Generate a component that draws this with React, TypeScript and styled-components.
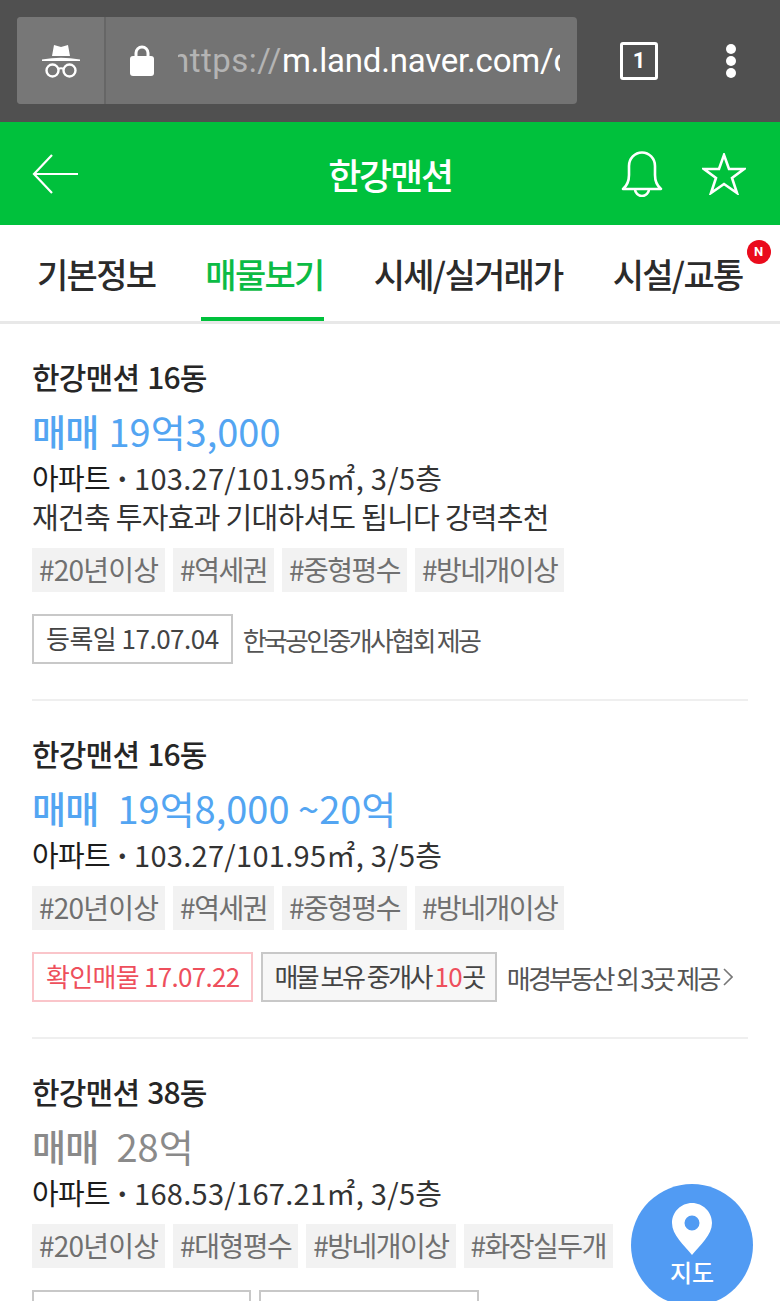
import React from 'react';
import styled, { createGlobalStyle } from 'styled-components';

const Global = createGlobalStyle`
  html, body { margin: 0; padding: 0; background: #fff; }
  body { font-family: "Noto Sans CJK KR", "Noto Sans", sans-serif; }
`;

const Page = styled.div`
  position: relative;
  width: 780px;
  height: 1301px;
  overflow: hidden;
  background: #fff;
`;

const BrowserBar = styled.div`
  height: 122px;
  box-sizing: border-box;
  padding: 17px 0 0 17px;
  background: #505050;
  display: flex;
  align-items: flex-start;
`;

const Omnibox = styled.div`
  width: 560px;
  height: 87px;
  display: flex;
  border-radius: 4px;
  background: #737373;
  overflow: hidden;
`;

const IncognitoCell = styled.div`
  width: 87px;
  flex: none;
  display: flex;
  align-items: center;
  justify-content: center;
  background: #777;
  border-right: 2px solid #666;
`;

const UrlCell = styled.div`
  flex: 1;
  min-width: 0;
  display: flex;
  align-items: center;
  padding-left: 24px;
`;

const Url = styled.div`
  margin-left: 24px;
  width: 382px;
  overflow: hidden;
  white-space: nowrap;
  font-family: "Roboto", sans-serif;
  font-size: 33px;
  letter-spacing: -0.2px;
  color: #fff;
  line-height: 44px;
`;

const UrlDim = styled.span`
  color: #b4b4b4;
  margin-left: -7px;
  letter-spacing: 0.5px;
`;

const TabCount = styled.div`
  margin: 25px 0 0 43px;
  width: 38px;
  height: 38px;
  box-sizing: border-box;
  border: 3px solid #fff;
  border-radius: 3px;
  color: #fff;
  font: 700 22px/32px "Roboto", sans-serif;
  text-align: center;
`;

const MenuDots = styled.div`
  margin: 27px 0 0 68px;
  display: flex;
  flex-direction: column;
  gap: 2px;
`;

const Dot = styled.span`
  width: 10px;
  height: 10px;
  border-radius: 50%;
  background: #fff;
`;

const GreenHeader = styled.header`
  position: relative;
  height: 103px;
  background: #00c13c;
  display: flex;
  align-items: center;
  justify-content: space-between;
  padding: 0 32px;
`;

const HeaderTitle = styled.h1`
  position: absolute;
  left: 0;
  right: 0;
  margin: 0;
  text-align: center;
  color: #fff;
  font-size: 36px;
  font-weight: 500;
  letter-spacing: -2.2px;
  line-height: 106px;
`;

const HeaderIcons = styled.div`
  display: flex;
  gap: 39px;
  align-items: center;
  margin-right: 2px;
`;

const Tabs = styled.nav`
  height: 99px;
  box-sizing: border-box;
  padding-left: 33px;
  border-bottom: 3px solid #e8e8e8;
  display: flex;
  gap: 46px;
`;

const Tab = styled.div<{ $active?: boolean }>`
  position: relative;
  flex: none;
  height: 96px;
  box-sizing: border-box;
  padding-left: 4px;
  text-align: center;
  font-size: 34px;
  font-weight: 500;
  letter-spacing: -1.7px;
  line-height: 98px;
  white-space: nowrap;
  color: ${p => (p.$active ? '#0cbb45' : '#2b2b2b')};
  border-bottom: 4px solid ${p => (p.$active ? '#00c13c' : 'transparent')};
`;

const NewBadge = styled.span`
  position: absolute;
  top: 15px;
  right: -28px;
  width: 24px;
  height: 24px;
  border-radius: 50%;
  background: #ea0b1c;
  color: #fff;
  font: 700 13px/24px "Roboto", sans-serif;
  letter-spacing: 0;
`;

const Listing = styled.article<{ $last?: boolean }>`
  margin: 0 32px;
  padding: 30px 0 35px;
  border-bottom: ${p => (p.$last ? 'none' : '2px solid #efefef')};
`;

const Name = styled.div`
  font-size: 30px;
  font-weight: 500;
  letter-spacing: -0.8px;
  word-spacing: 2px;
  line-height: 44px;
  color: #262626;
`;

const Price = styled.div<{ $gap: number; $muted?: boolean }>`
  display: flex;
  gap: ${p => p.$gap}px;
  margin-top: 9px;
  line-height: 48px;
  white-space: nowrap;
  color: ${p => (p.$muted ? '#8a8a8a' : '#53a5f2')};
`;

const PriceKind = styled.span`
  font-size: 37px;
  font-weight: 500;
  letter-spacing: -0.8px;
`;

const PriceValue = styled.span`
  font-size: 38px;
  letter-spacing: 0;
`;

const SpecRow = styled.div<{ $tight?: boolean }>`
  margin-top: ${p => (p.$tight ? -1 : 2)}px;
  font-size: 29px;
  line-height: 40px;
  letter-spacing: -0.7px;
  color: #333;
  white-space: nowrap;
`;

const SpecType = styled.span`
  color: #1c1c1c;
  letter-spacing: -0.7px;
`;

const SpecValue = styled.span`
  letter-spacing: 0.3px;
`;

const SpecDot = styled.span`
  font-weight: 700;
  margin: 0 -2px;
`;

const TagRow = styled.div`
  display: flex;
  gap: 8px;
  margin-top: 12px;
`;

const Tag = styled.span<{ $wide?: boolean }>`
  height: 44px;
  padding: 0 7px;
  background: #f2f2f2;
  color: #707070;
  font-size: 28px;
  line-height: 42px;
  letter-spacing: ${p => (p.$wide ? -0.8 : -1.5)}px;
  white-space: nowrap;
`;

const MetaRow = styled.div`
  display: flex;
  align-items: center;
  gap: 8px;
  margin-top: 22px;
  height: 50px;
`;

const Chip = styled.span<{ $red?: boolean; $grey?: boolean; $w?: number }>`
  height: 50px;
  box-sizing: border-box;
  padding: 0 ${p => (p.$grey ? 11 : 12)}px;
  ${p => (p.$w ? `width: ${p.$w}px;` : '')}
  border: 2px solid ${p => (p.$red ? '#fac5ca' : '#c8c8c8')};
  background: ${p => (p.$grey ? '#f7f7f7' : '#fff')};
  color: ${p => (p.$red ? '#ee4f5c' : '#444')};
  font-size: 26px;
  line-height: 44px;
  letter-spacing: ${p => (p.$grey ? -2.5 : p.$red ? -0.7 : -0.5)}px;
  white-space: nowrap;
`;

const RedNum = styled.span`
  color: #ee4f5c;
  letter-spacing: -0.5px;
`;

const Source = styled.span`
  display: flex;
  align-items: center;
  gap: 4px;
  margin-left: 2px;
  font-size: 26px;
  letter-spacing: -2.7px;
  color: #555;
  white-space: nowrap;
`;

const MapButton = styled.div`
  position: absolute;
  left: 631px;
  top: 1184px;
  width: 122px;
  height: 122px;
  border-radius: 50%;
  background: #519bf3;
  color: #fff;
  display: flex;
  flex-direction: column;
  align-items: center;
  padding-top: 19px;
  box-sizing: border-box;
`;

const MapLabel = styled.span`
  font-size: 24px;
  font-weight: 500;
  line-height: 30px;
  margin-top: 2px;
`;

const SpecLine = ({ area }: { area: string }) => (
  <SpecRow>
    <SpecType>아파트</SpecType> <SpecDot>·</SpecDot> <SpecValue>{area}, 3/5층</SpecValue>
  </SpecRow>
);

const TagList = ({ tags }: { tags: string[] }) => (
  <TagRow>
    {tags.map((t, i) => (
      <Tag key={t} $wide={i === 0}>{t}</Tag>
    ))}
  </TagRow>
);

const listingTags = ['#20년이상', '#역세권', '#중형평수', '#방네개이상'];

const App = () => (
  <>
    <Global />
    <Page>
      <BrowserBar>
        <Omnibox>
          <IncognitoCell>
            <svg width="38" height="36" viewBox="0 0 38 36" fill="none">
              <path d="M10 13 L12 2 L19 4 L26 2 L28 13 Z" fill="#fff" />
              <path d="M0 16.5 Q19 13 38 16.5 L38 18 L0 18 Z" fill="#fff" />
              <circle cx="10.5" cy="27.5" r="6" stroke="#fff" strokeWidth="2.4" />
              <circle cx="27.5" cy="27.5" r="6" stroke="#fff" strokeWidth="2.4" />
              <path d="M16 26 Q19 24.5 22 26" stroke="#fff" strokeWidth="2" />
            </svg>
          </IncognitoCell>
          <UrlCell>
            <svg width="24" height="31" viewBox="0 0 24 31" fill="none">
              <path d="M6 12 V8 a6 6 0 0 1 12 0 V12" stroke="#fff" strokeWidth="3" />
              <rect x="0" y="11" width="24" height="20" rx="3" fill="#fff" />
            </svg>
            <Url>
              <UrlDim>https://</UrlDim>m.land.naver.com/c
            </Url>
          </UrlCell>
        </Omnibox>
        <TabCount>1</TabCount>
        <MenuDots>
          <Dot />
          <Dot />
          <Dot />
        </MenuDots>
      </BrowserBar>

      <GreenHeader>
        <svg width="47" height="40" viewBox="0 0 47 40" fill="none" stroke="#fff" strokeWidth="2.2">
          <path d="M46 20 H2 M20 1 L2 20 L20 39" />
        </svg>
        <HeaderTitle>한강맨션</HeaderTitle>
        <HeaderIcons>
          <svg width="42" height="46" viewBox="0 0 42 46" fill="none" stroke="#fff" strokeWidth="2.6">
            <path d="M2 38 Q8 33 8 24 V15 a13 13.5 0 0 1 26 0 V24 Q34 33 40 38 Z" strokeLinejoin="round" />
            <path d="M14 38 a7 7 0 0 0 14 0" />
          </svg>
          <svg width="44" height="42" viewBox="0 0 44 42" fill="none" stroke="#fff" strokeWidth="2.6">
            <path d="M22 2 L27 16 L42 16 L30 25 L35 40 L22 31 L9 40 L14 25 L2 16 L17 16 Z" />
          </svg>
        </HeaderIcons>
      </GreenHeader>

      <Tabs>
        <Tab>기본정보</Tab>
        <Tab $active>매물보기</Tab>
        <Tab>시세/실거래가</Tab>
        <Tab>
          시설/교통
          <NewBadge>N</NewBadge>
        </Tab>
      </Tabs>

      <Listing>
        <Name>한강맨션 16동</Name>
        <Price $gap={10}>
          <PriceKind>매매</PriceKind>
          <PriceValue>19억3,000</PriceValue>
        </Price>
        <SpecLine area="103.27/101.95㎡" />
        <SpecRow $tight>재건축 투자효과 기대하셔도 됩니다 강력추천</SpecRow>
        <TagList tags={listingTags} />
        <MetaRow>
          <Chip>등록일 17.07.04</Chip>
          <Source>한국공인중개사협회 제공</Source>
        </MetaRow>
      </Listing>

      <Listing>
        <Name>한강맨션 16동</Name>
        <Price $gap={19}>
          <PriceKind>매매</PriceKind>
          <PriceValue>19억8,000 ~20억</PriceValue>
        </Price>
        <SpecLine area="103.27/101.95㎡" />
        <TagList tags={listingTags} />
        <MetaRow>
          <Chip $red>확인매물 17.07.22</Chip>
          <Chip $grey>
            매물 보유 중개사 <RedNum>10</RedNum>곳
          </Chip>
          <Source>
            매경부동산 외 3곳 제공
            <svg width="10" height="20" viewBox="0 0 10 20" fill="none" stroke="#777" strokeWidth="1.6">
              <path d="M1 2 L9 10 L1 18" />
            </svg>
          </Source>
        </MetaRow>
      </Listing>

      <Listing $last>
        <Name>한강맨션 38동</Name>
        <Price $gap={18} $muted>
          <PriceKind>매매</PriceKind>
          <PriceValue>28억</PriceValue>
        </Price>
        <SpecLine area="168.53/167.21㎡" />
        <TagList tags={['#20년이상', '#대형평수', '#방네개이상', '#화장실두개']} />
        <MetaRow>
          <Chip $w={219} />
          <Chip $w={220} />
        </MetaRow>
      </Listing>

      <MapButton>
        <svg width="40" height="52" viewBox="0 0 40 52">
          <path
            fillRule="evenodd"
            fill="#fff"
            d="M20 0 C31 0 40 9 40 20 C40 32 28 42 20 52 C12 42 0 32 0 20 C0 9 9 0 20 0 Z M20 12.5 a7.5 7.5 0 1 0 0 15 a7.5 7.5 0 1 0 0 -15 Z"
          />
        </svg>
        <MapLabel>지도</MapLabel>
      </MapButton>
    </Page>
  </>
);

export default App;
